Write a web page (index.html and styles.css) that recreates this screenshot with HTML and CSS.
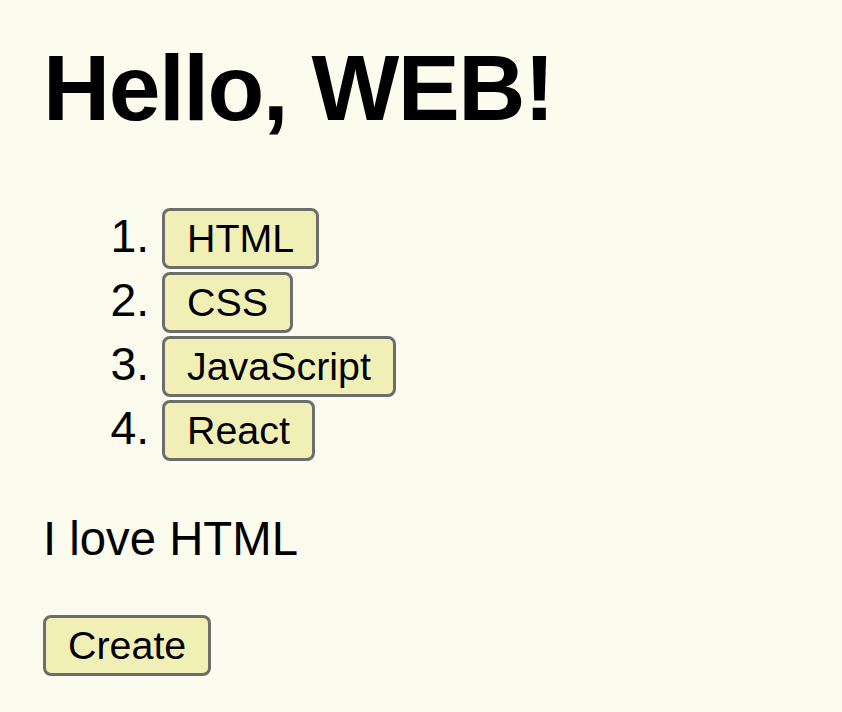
FILE: index.html
```html
<!DOCTYPE html>
<html>
<head>
<meta charset="utf-8">
<title>Hello, WEB!</title>
<link rel="stylesheet" href="styles.css">
</head>
<body>
<div class="page">
  <h1 class="title">Hello, WEB!</h1>
  <ol class="topics">
    <li class="topic"><button class="btn">HTML</button></li>
    <li class="topic"><button class="btn">CSS</button></li>
    <li class="topic"><button class="btn">JavaScript</button></li>
    <li class="topic"><button class="btn">React</button></li>
  </ol>
  <p class="message">I love HTML</p>
  <button class="btn">Create</button>
</div>
</body>
</html>
```

FILE: styles.css
```css
html, body {
  margin: 0;
  padding: 0;
  background: #fcfcee;
}
body {
  font-family: "Liberation Sans", Arial, sans-serif;
  color: #000;
}
.page {
  padding: 35px 0 0 43px;
}
.title {
  margin: 0;
  font-size: 93px;
  font-weight: bold;
  line-height: 107px;
  letter-spacing: -1.5px;
}
.topics {
  margin: 66px 0 0 0;
  padding-left: 119px;
  font-size: 46.4px;
}
.topic {
  margin-bottom: 3px;
}
.btn {
  font-family: "Liberation Sans", Arial, sans-serif;
  font-size: 39.4px;
  line-height: 45px;
  padding: 5px 22px;
  border: 3px solid #6d6d6d;
  border-radius: 8px;
  background: #f0f0b6;
  color: #000;
  margin: 0;
}
.message {
  margin: 50px 0 49px 0;
  font-size: 47.3px;
}
```
